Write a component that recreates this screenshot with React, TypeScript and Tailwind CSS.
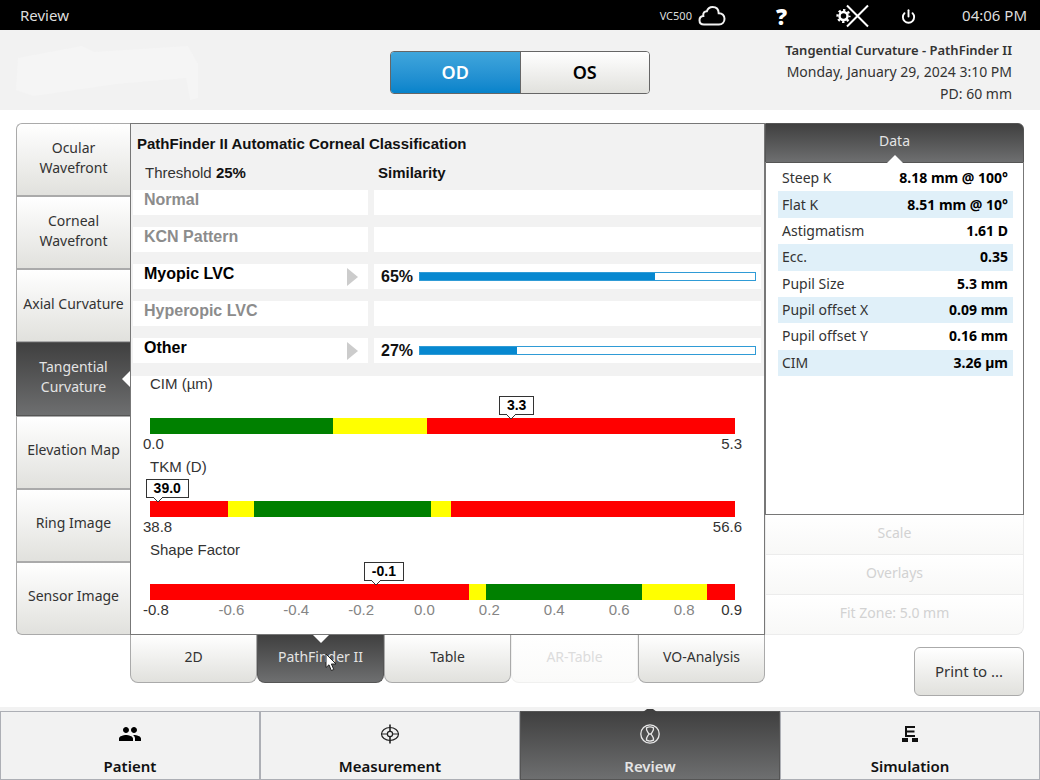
import clsx from "clsx";
import { Power } from "lucide-react";
import { MdPeople } from "react-icons/md";

type Segment = { color: "red" | "yellow" | "green"; size: number };

type GaugeData = {
  label: string;
  value: string;
  position: number;
  min: string;
  max: string;
  segments: Segment[];
  ticks?: { text: string; at: number }[];
};

const maps = [
  "Ocular Wavefront",
  "Corneal Wavefront",
  "Axial Curvature",
  "Tangential Curvature",
  "Elevation Map",
  "Ring Image",
  "Sensor Image",
];

const patterns = [
  { name: "Normal" },
  { name: "KCN Pattern" },
  { name: "Myopic LVC", similarity: 65, bar: 70 },
  { name: "Hyperopic LVC" },
  { name: "Other", similarity: 27, bar: 29 },
];

const gauges: GaugeData[] = [
  {
    label: "CIM (µm)",
    value: "3.3",
    position: 61.7,
    min: "0.0",
    max: "5.3",
    segments: [
      { color: "green", size: 31.3 },
      { color: "yellow", size: 16.1 },
      { color: "red", size: 52.6 },
    ],
  },
  {
    label: "TKM (D)",
    value: "39.0",
    position: 1.3,
    min: "38.8",
    max: "56.6",
    segments: [
      { color: "red", size: 13.4 },
      { color: "yellow", size: 4.4 },
      { color: "green", size: 30.2 },
      { color: "yellow", size: 3.5 },
      { color: "red", size: 48.5 },
    ],
  },
  {
    label: "Shape Factor",
    value: "-0.1",
    position: 38.6,
    min: "-0.8",
    max: "0.9",
    segments: [
      { color: "red", size: 54.6 },
      { color: "yellow", size: 2.8 },
      { color: "green", size: 26.7 },
      { color: "yellow", size: 11.1 },
      { color: "red", size: 4.8 },
    ],
    ticks: [
      { text: "-0.6", at: 13.9 },
      { text: "-0.4", at: 25 },
      { text: "-0.2", at: 36.1 },
      { text: "0.0", at: 46.9 },
      { text: "0.2", at: 58 },
      { text: "0.4", at: 69.1 },
      { text: "0.6", at: 80.2 },
      { text: "0.8", at: 91.3 },
    ],
  },
];

const readings = [
  ["Steep K", "8.18 mm @ 100°"],
  ["Flat K", "8.51 mm @ 10°"],
  ["Astigmatism", "1.61 D"],
  ["Ecc.", "0.35"],
  ["Pupil Size", "5.3 mm"],
  ["Pupil offset X", "0.09 mm"],
  ["Pupil offset Y", "0.16 mm"],
  ["CIM", "3.26 µm"],
];

const views = ["2D", "PathFinder II", "Table", "AR-Table", "VO-Analysis"];

const segmentColors = {
  red: "bg-[#ff0000]",
  yellow: "bg-[#ffff00]",
  green: "bg-[#008000]",
};

const lightButton = "bg-linear-to-b from-white to-[#e1e1dd] text-[#333]";
const darkButton = "bg-linear-to-b from-[#404040] to-[#6e6f70] text-[#e4e4e4]";

function CloudIcon() {
  return (
    <svg width="28" height="22" viewBox="0 0 28 22" fill="none" stroke="#f2f2f2" strokeWidth="2">
      <path d="M6 19.5C3 19.5 1.5 17.500 1.500 15.200C1.500 12.800 3.200 11.200 5.300 11C4.800 7.800 6.500 6.300 8.800 6.300C9.800 3.500 11.700 2 14.500 2C18.300 2 20.600 4.500 20.700 8.300C24.300 8.200 26.500 10.500 26.500 13.800C26.500 17.200 24.300 19.500 21 19.500Z" />
    </svg>
  );
}

function SettingsOffIcon() {
  return (
    <svg width="34" height="24" viewBox="0 0 34 24" fill="none" stroke="white">
      <circle cx="8.500" cy="12" r="4" strokeWidth="2.500" />
      <circle cx="8.500" cy="12" r="6" strokeWidth="2.200" strokeDasharray="2.360 2.352" strokeDashoffset="1.180" />
      <path d="M12 1.500L33 22.500M33 1.500L12 22.500" strokeWidth="2" />
    </svg>
  );
}

function MeasurementIcon() {
  return (
    <svg width="20" height="20" viewBox="0 0 20 20" fill="none" stroke="#222">
      <ellipse cx="10" cy="10" rx="8.500" ry="6.500" strokeWidth="1.200" />
      <circle cx="10" cy="10" r="2.600" strokeWidth="1.200" />
      <path d="M1 10H7.400M12.600 10H19" strokeWidth="1" />
      <path d="M10 .5V7.400M10 12.600V19.500" strokeWidth="1.600" />
    </svg>
  );
}

function ReviewIcon() {
  return (
    <svg width="20" height="20" viewBox="0 0 20 20" fill="none" stroke="#e8e8e8" strokeWidth="1.300">
      <circle cx="10" cy="10" r="9.200" />
      <path d="M6.500 3.800C8.500 2.800 11.500 2.800 13.500 3.800C14.200 6.500 12 8 11 10C12 12 14.200 13.500 13.500 16.200C11.500 17.200 8.500 17.200 6.500 16.200C5.800 13.500 8 12 9 10C8 8 5.800 6.500 6.500 3.800Z" />
      <path d="M8.500 10H11.500" />
    </svg>
  );
}

function SimulationIcon() {
  return (
    <svg width="18" height="18" viewBox="0 0 18 18" fill="none" stroke="#111" strokeWidth="2">
      <path d="M14 2H5V11H14M5 6.500H13.500" />
      <path d="M1 15H7M11 15H17" strokeWidth="4" />
    </svg>
  );
}

const sections = [
  { name: "Patient", icon: <MdPeople size={24} color="#000" /> },
  { name: "Measurement", icon: <MeasurementIcon /> },
  { name: "Review", icon: <ReviewIcon /> },
  { name: "Simulation", icon: <SimulationIcon /> },
];

function Gauge({ gauge }: { gauge: GaugeData }) {
  return (
    <div className="pb-[5px]">
      <div className="leading-4">{gauge.label}</div>

      <div className="relative mt-[26px] flex h-4">
        {gauge.segments.map((segment, i) => (
          <div key={i} className={segmentColors[segment.color]} style={{ width: `${segment.size}%` }} />
        ))}

        {/* Value callout pointing at its place on the scale */}
        <div className="absolute -top-[22px]" style={{ left: `${gauge.position}%` }}>
          <div className="-ml-3 h-[19px] border border-[#333] bg-white px-[7px] text-sm leading-[17px] font-bold text-black">
            {gauge.value}
          </div>
          <svg width="10" height="6" viewBox="0 0 10 6" className="absolute top-[18px] -left-[5px]">
            <path d="M0 0L5 5L10 0" fill="white" stroke="#333" strokeWidth="1" />
            <path d="M1 0H9" stroke="white" strokeWidth="1.500" />
          </svg>
        </div>
      </div>

      <div className="relative h-5 leading-5">
        <div className="-mx-[7px] flex justify-between">
          <span>{gauge.min}</span>
          <span>{gauge.max}</span>
        </div>
        {gauge.ticks?.map((tick) => (
          <span
            key={tick.text}
            className="absolute top-0 -translate-x-1/2 text-[#858585]"
            style={{ left: `${tick.at}%` }}
          >
            {tick.text}
          </span>
        ))}
      </div>
    </div>
  );
}

export default function App() {
  return (
    <div className="flex min-h-screen flex-col bg-white font-['Noto_Sans',sans-serif] text-sm text-[#333]">
      {/* Status bar */}
      <header className="flex h-[30px] items-center bg-black pt-0.5 pr-[13px] pl-5 text-[15px] text-[#ddd]">
        <span>Review</span>
        <div className="ml-auto flex items-center">
          <span className="mr-1.5 text-[11px]">VC500</span>
          <CloudIcon />
          <button aria-label="Help" className="ml-[50px] text-[22px] leading-none font-black text-white">
            ?
          </button>
          <button aria-label="Settings" className="ml-12">
            <SettingsOffIcon />
          </button>
          <button aria-label="Power" className="ml-8 text-white">
            <Power size={15} strokeWidth={3} />
          </button>
          <span className="ml-[46px]">04:06 PM</span>
        </div>
      </header>

      {/* Exam header */}
      <div className="grid h-20 grid-cols-[1fr_260px_1fr] items-center bg-[#f2f2f2] px-7 pt-1">
        <svg width="184" height="56" viewBox="0 0 184 56" fill="#f5f5f5" className="-ml-3">
          <path d="M2 14L66 2L78 8L172 2L182 20V54L174 56L170 34L100 40L18 52L0 46Z" />
        </svg>
        <div className="flex h-[43px] overflow-hidden rounded-sm border border-[#666] text-lg font-semibold">
          <button className="flex-1 bg-linear-to-b from-[#3fa6dc] to-[#0583cb] text-white">OD</button>
          <button className="flex-1 border-l border-[#666] bg-linear-to-b from-white to-[#e1e1dd] text-black">OS</button>
        </div>
        <div className="text-right leading-[22px]">
          <div className="text-[13px] leading-[22px] font-semibold">Tangential Curvature - PathFinder II</div>
          <div>Monday, January 29, 2024 3:10 PM</div>
          <div>PD: 60 mm</div>
        </div>
      </div>

      <main className="grid grid-cols-[114px_1fr_259px] px-4 pt-[13px] pb-[11px]">
        {/* Map list */}
        <div className="flex min-h-[512px] flex-col">
          {maps.map((map) => {
            const active = map === "Tangential Curvature";
            return (
              <button
                key={map}
                className={clsx(
                  "relative flex-1 border border-r-0 px-1 pb-1 leading-5 first:rounded-tl-md last:rounded-bl-md",
                  active ? darkButton : lightButton,
                  active ? "border-[#555]" : "border-[#aaa]",
                )}
              >
                <span className={clsx("mx-auto block", map.length > 15 || map.startsWith("Ocular") ? "w-20" : "")}>
                  {map}
                </span>
                {active && (
                  <svg width="8" height="16" viewBox="0 0 8 16" className="absolute top-7 right-0">
                    <path d="M8 0L0 8L8 16Z" fill="white" />
                  </svg>
                )}
              </button>
            );
          })}
        </div>

        {/* Classification panel */}
        <section className="border border-[#777] font-['Liberation_Sans',sans-serif] text-[15px]">
          <div className="bg-[#f2f2f2] pt-2.5 pr-[3px] pb-[13px] pl-0.5">
            <h1 className="pl-1 leading-5 font-bold text-[#111]">PathFinder II Automatic Corneal Classification</h1>
            <div className="mt-[9px] mb-[7px] grid grid-cols-[235px_1fr] gap-x-1.5 leading-5">
              <div className="pl-3">
                Threshold <b className="text-[#111]">25%</b>
              </div>
              <b className="pl-1 text-[#111]">Similarity</b>
            </div>
            <div className="flex flex-col gap-3 text-base">
              {patterns.map((pattern) => (
                <div key={pattern.name} className="grid h-[25px] grid-cols-[235px_1fr] gap-x-1.5 font-bold">
                  <div
                    className={clsx(
                      "flex justify-between bg-white pr-2.5 pl-[11px] leading-5",
                      pattern.similarity ? "text-black" : "text-[#8c8c8c]",
                    )}
                  >
                    {pattern.name}
                    {pattern.similarity && (
                      <svg width="11" height="18" viewBox="0 0 11 18" className="self-center">
                        <path d="M0 0L11 9L0 18Z" fill="#ccc" />
                      </svg>
                    )}
                  </div>
                  <div className="flex items-center gap-1.5 bg-white pr-[5px] pl-[7px]">
                    {pattern.similarity && (
                      <>
                        <span className="text-[#111]">{pattern.similarity}%</span>
                        <div className="h-[9px] flex-1 border border-[#2f9bd6]">
                          <div className="h-full bg-[#0788d0]" style={{ width: `${pattern.bar}%` }} />
                        </div>
                      </>
                    )}
                  </div>
                </div>
              ))}
            </div>
          </div>

          <div className="pr-[29px] pl-[19px]">
            {gauges.map((gauge) => (
              <Gauge key={gauge.label} gauge={gauge} />
            ))}
          </div>
        </section>

        {/* Data column */}
        <aside className="flex flex-col">
          <button className={clsx("relative h-10 rounded-tr-md border border-[#555] pb-1", darkButton)}>
            Data
            <svg width="16" height="8" viewBox="0 0 16 8" className="absolute -bottom-px left-1/2 -translate-x-1/2">
              <path d="M0 8L8 0L16 8Z" fill="white" />
            </svg>
          </button>
          <div className="flex-1 border border-t-0 border-[#777] pt-0.5 pr-2.5 pl-3">
            <table className="h-[211px] w-full">
              <tbody>
                {readings.map(([name, value]) => (
                  <tr key={name} className="even:bg-[#e0f0f9]">
                    <th scope="row" className="py-0 pl-1 text-left font-normal">
                      {name}
                    </th>
                    <td className="py-0 pr-[5px] text-right font-bold text-black">{value}</td>
                  </tr>
                ))}
              </tbody>
            </table>
          </div>
          {["Scale", "Overlays", "Fit Zone: 5.0 mm"].map((name) => (
            <button
              key={name}
              disabled
              className="h-10 border border-t-0 border-[#ececec] bg-linear-to-b from-white to-[#f8f8f7] pb-1 text-[#d2d2d2] last:rounded-br-lg"
            >
              {name}
            </button>
          ))}
        </aside>

        {/* View tabs */}
        <nav className="col-start-2 grid h-12 grid-cols-5">
          {views.map((view) => {
            const active = view === "PathFinder II";
            const disabled = view === "AR-Table";
            return (
              <button
                key={view}
                disabled={disabled}
                className={clsx(
                  "relative rounded-b-lg border border-t-0 pb-1",
                  active && [darkButton, "border-[#555]"],
                  disabled && "border-[#f0f0ef] bg-linear-to-b from-white to-[#fafaf9] text-[#dcdcdc]",
                  !active && !disabled && [lightButton, "border-[#aaa]"],
                )}
              >
                {view}
                {active && (
                  <>
                    <svg width="16" height="8" viewBox="0 0 16 8" className="absolute top-0 left-1/2 -translate-x-1/2">
                      <path d="M0 0L8 8L16 0Z" fill="white" />
                    </svg>
                    <svg width="12" height="19" viewBox="0 0 12 19" className="absolute top-[18px] left-[67px]">
                      <path
                        d="M1 1V14.500L4 11.800L6.300 17.500L8.800 16.500L6.400 11H11Z"
                        fill="white"
                        stroke="#222"
                        strokeWidth="1"
                      />
                    </svg>
                  </>
                )}
              </button>
            );
          })}
        </nav>
        <button
          className={clsx("mt-3 h-[49px] w-[110px] justify-self-end rounded-md border border-[#aaa] text-[15px]", lightButton)}
        >
          Print to ...
        </button>
      </main>

      {/* Section navigation */}
      <nav className="mt-auto grid grid-cols-4 bg-[#f2f2f2] pt-1">
        {sections.map(({ name, icon }) => {
          const active = name === "Review";
          return (
            <button
              key={name}
              className={clsx(
                "relative flex h-[69px] flex-col items-center border text-[15px] font-semibold",
                active ? [darkButton, "border-[#555]"] : "border-[#adafb5] text-[#111]",
              )}
            >
              {active && (
                <svg width="14" height="4" viewBox="0 0 14 4" className="absolute -top-1 left-1/2 -translate-x-1/2">
                  <path d="M0 4L4 1H10L14 4Z" fill="#404040" />
                </svg>
              )}
              <span className="mt-2.5 flex h-6 items-center">{icon}</span>
              <span className="mt-2 leading-6">{name}</span>
            </button>
          );
        })}
      </nav>
    </div>
  );
}
